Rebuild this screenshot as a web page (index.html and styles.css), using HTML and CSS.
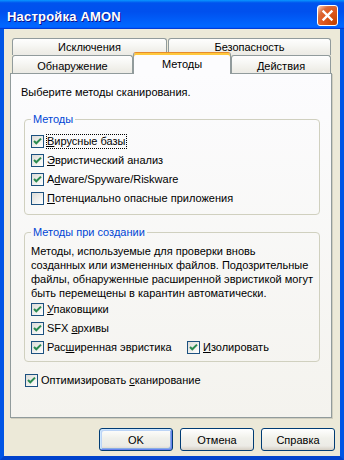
FILE: index.html
```html
<!DOCTYPE html>
<html lang="ru">
<head>
<meta charset="utf-8">
<title>Настройка AMON</title>
<link rel="stylesheet" href="styles.css">
</head>
<body>
<div class="window">
  <div class="titlebar">
    <span class="title">Настройка AMON</span>
    <button class="close" aria-label="Закрыть">
      <svg viewBox="0 0 19 19" width="19" height="19"><path d="M5.5 5.5 L13.5 13.5 M13.5 5.5 L5.5 13.5" stroke="#fff" stroke-width="2.4" stroke-linecap="square"/></svg>
    </button>
  </div>
  <div class="frame">
    <div class="tabs">
      <div class="tabrow row1">
        <div class="tab t-excl">Исключения</div>
        <div class="tab t-sec">Безопасность</div>
      </div>
      <div class="tabrow row2">
        <div class="tab t-det">Обнаружение</div>
        <div class="tab t-meth selected">Методы</div>
        <div class="tab t-act">Действия</div>
      </div>
    </div>
    <div class="panel">
      <p class="intro">Выберите методы сканирования.</p>
      <fieldset class="group g1">
        <legend>Методы</legend>
        <div class="cb"><span class="box"><svg viewBox="0 0 11 11"><path d="M2 5 L4.3 7.3 L9 2.6" fill="none" stroke="#2a8a50" stroke-width="2"/></svg></span><span class="lbl focus"><u>В</u>ирусные базы</span></div>
        <div class="cb"><span class="box"><svg viewBox="0 0 11 11"><path d="M2 5 L4.3 7.3 L9 2.6" fill="none" stroke="#2a8a50" stroke-width="2"/></svg></span><span class="lbl"><u>Э</u>вристический анализ</span></div>
        <div class="cb"><span class="box"><svg viewBox="0 0 11 11"><path d="M2 5 L4.3 7.3 L9 2.6" fill="none" stroke="#2a8a50" stroke-width="2"/></svg></span><span class="lbl">A<u>d</u>ware/Spyware/Riskware</span></div>
        <div class="cb"><span class="box"></span><span class="lbl"><u>П</u>отенциально опасные приложения</span></div>
      </fieldset>
      <fieldset class="group g2">
        <legend>Методы при создании</legend>
        <p class="desc">Методы, используемые для проверки вновь<br>созданных или измененных файлов. Подозрительные<br>файлы, обнаруженные расширенной эвристикой могут<br>быть перемещены в карантин автоматически.</p>
        <div class="cb"><span class="box"><svg viewBox="0 0 11 11"><path d="M2 5 L4.3 7.3 L9 2.6" fill="none" stroke="#2a8a50" stroke-width="2"/></svg></span><span class="lbl"><u>У</u>паковщики</span></div>
        <div class="cb"><span class="box"><svg viewBox="0 0 11 11"><path d="M2 5 L4.3 7.3 L9 2.6" fill="none" stroke="#2a8a50" stroke-width="2"/></svg></span><span class="lbl">SFX <u>а</u>рхивы</span></div>
        <div class="cbrow">
          <div class="cb wide"><span class="box"><svg viewBox="0 0 11 11"><path d="M2 5 L4.3 7.3 L9 2.6" fill="none" stroke="#2a8a50" stroke-width="2"/></svg></span><span class="lbl">Рас<u>ш</u>иренная эвристика</span></div>
          <div class="cb"><span class="box"><svg viewBox="0 0 11 11"><path d="M2 5 L4.3 7.3 L9 2.6" fill="none" stroke="#2a8a50" stroke-width="2"/></svg></span><span class="lbl"><u>И</u>золировать</span></div>
        </div>
      </fieldset>
      <div class="cb optimize"><span class="box"><svg viewBox="0 0 11 11"><path d="M2 5 L4.3 7.3 L9 2.6" fill="none" stroke="#2a8a50" stroke-width="2"/></svg></span><span class="lbl">Оптимизировать <u>с</u>канирование</span></div>
    </div>
    <div class="buttons">
      <button class="btn default">OK</button>
      <button class="btn">Отмена</button>
      <button class="btn">Справка</button>
    </div>
  </div>
</div>
</body>
</html>
```

FILE: styles.css
```css
* { box-sizing: border-box; }
html, body { margin: 0; padding: 0; }
body {
  width: 344px;
  height: 460px;
  overflow: hidden;
  font-family: "Liberation Sans", Arial, sans-serif;
  font-size: 11px;
  color: #000;
  background: #ece9d8;
}
.window {
  width: 344px;
  height: 460px;
  display: flex;
  flex-direction: column;
}
.titlebar {
  height: 29px;
  flex: none;
  display: flex;
  justify-content: space-between;
  align-items: flex-start;
  padding: 0 6px 0 7px;
  background: linear-gradient(to bottom, #0997ff 0%, #0053ee 10%, #0050ee 40%, #0066ff 88%, #0066ff 93%, #005bff 95%, #003dd7 97%, #003dd7 100%);
}
.title {
  color: #fff;
  font-family: "Liberation Sans", Arial, sans-serif;
  font-weight: bold;
  font-size: 13px;
  line-height: 16px;
  padding-top: 9px;
  letter-spacing: 0.2px;
  text-shadow: 1px 1px #0f1089;
}
.close {
  width: 21px;
  height: 21px;
  margin-top: 5px;
  padding: 0;
  border: 1px solid #fff;
  border-radius: 3px;
  background: radial-gradient(circle at 90% 90%, #c44200 0%, #e05a22 55%, #d86a3a 72%, #f7b89a 92%, #fff 100%);
  display: flex;
  align-items: center;
  justify-content: center;
}
.close svg { display: block; }
.frame {
  flex: 1;
  display: flex;
  flex-direction: column;
  background: #ece9d8;
  border-left: 4px solid #0055e5;
  border-right: 4px solid #0055e5;
  border-bottom: 4px solid #0042cc;
  padding: 9px 0 5px 0;
}
.tabs {
  height: 35px;
  margin-left: 8px;
  flex: none;
}
.tabrow { display: flex; }
.row1 { height: 17px; }
.row2 { height: 18px; }
.tab {
  border: 1px solid #919b9c;
  border-bottom: none;
  border-radius: 3px 3px 0 0;
  background: linear-gradient(#fefefe, #f7f7f4 40%, #efeee8 80%, #ecebe6);
  display: flex;
  align-items: center;
  justify-content: center;
  flex: none;
}
.row1 .tab { height: 17px; }
.row2 .tab { height: 18px; padding-top: 2px; }
.t-excl { width: 155px; }
.t-sec { width: 163px; margin-left: 1px; }
.t-det { width: 121px; }
.t-meth { width: 98px; }
.t-act { width: 100px; }
.row2 .tab.selected {
  position: relative;
  z-index: 2;
  height: 22px;
  margin-top: -3px;
  padding-top: 0;
  background: #fcfcfe;
  border-top: 1px solid #e68b2c;
  box-shadow: inset 0 2px #ffc83c;
}
.panel {
  height: 345px;
  flex: none;
  margin: 0 8px 0 6px;
  border: 1px solid #919b9c;
  background: linear-gradient(#fcfcfe, #f4f3ee);
  box-shadow: 1px 1px 0 #d0cebf;
  padding: 12px 11px 0 10px;
}
.intro {
  margin: 0;
  line-height: 13px;
}
.group {
  margin: 14px 0 0 3px;
  border: 1px solid #d0d0bf;
  border-radius: 4px;
  padding: 6px 0 6px 6px;
  min-width: 0;
}
.group legend {
  padding: 0 2px;
  color: #0046d5;
  line-height: 13px;
}
.g2 {
  margin-top: 11px;
  padding-top: 5px;
  padding-bottom: 4px;
}
.desc {
  margin: 0;
  line-height: 14px;
  white-space: nowrap;
}
.cb {
  display: flex;
  align-items: center;
  height: 19px;
}
.cbrow { display: flex; }
.cb.wide { width: 156px; }
.box {
  width: 13px;
  height: 13px;
  flex: none;
  margin-right: 3px;
  border: 1px solid #1c5180;
  background: linear-gradient(135deg, #dcdcd7, #fff);
  display: flex;
}
.box svg { width: 11px; height: 11px; display: block; }
.lbl { white-space: nowrap; line-height: 13px; }
.focus { outline: 1px dotted #000; outline-offset: 0; }
.optimize { margin: 9px 0 0 4px; }
.buttons {
  display: flex;
  justify-content: flex-end;
  gap: 7px;
  padding-right: 5px;
  margin-top: 10px;
}
.btn {
  width: 74px;
  height: 23px;
  padding: 0;
  border: 1px solid #003c74;
  border-radius: 3px;
  background: linear-gradient(#fff, #f0f0ea 45%, #ecebe6 80%, #d6d0c5);
  font-family: "Liberation Sans", Arial, sans-serif;
  font-size: 11px;
  color: #000;
}
.btn.default {
  box-shadow: inset 1px 1px #cee7ff, inset -1px -1px #6982ee, inset 2px 2px #bcd4f6, inset -2px -2px #89ade4;
}
```
